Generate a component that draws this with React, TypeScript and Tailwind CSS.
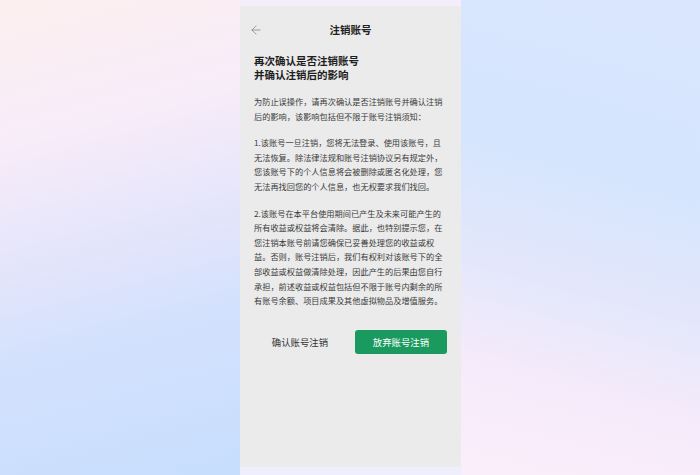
import { ArrowLeft } from 'lucide-react'

const paragraphs: string[][] = [
  ['为防止误操作，请再次确认是否注销账号并确认注销', '后的影响，该影响包括但不限于账号注销须知：'],
  [
    '1.该账号一旦注销，您将无法登录、使用该账号，且',
    '无法恢复。除法律法规和账号注销协议另有规定外，',
    '您该账号下的个人信息将会被删除或匿名化处理，您',
    '无法再找回您的个人信息，也无权要求我们找回。',
  ],
  [
    '2.该账号在本平台使用期间已产生及未来可能产生的',
    '所有收益或权益将会清除。据此，也特别提示您，在',
    '您注销本账号前请您确保已妥善处理您的收益或权',
    '益。否则，账号注销后，我们有权利对该账号下的全',
    '部收益或权益做清除处理，因此产生的后果由您自行',
    '承担，前述收益或权益包括但不限于账号内剩余的所',
    '有账号余额、项目成果及其他虚拟物品及增值服务。',
  ],
]

export default function App() {
  return (
    <div
      className="flex h-[475px] w-[700px] overflow-hidden"
      style={{ fontFamily: '"Noto Sans CJK SC", "Noto Sans", sans-serif' }}
    >
      <div className="w-[240px] bg-[linear-gradient(165deg,#fcefef_0%,#f7ecf9_28%,#e4e5fb_50%,#d2e1fd_70%,#c7defd_100%)]" />

      <div className="flex w-[221px] flex-col bg-[linear-gradient(180deg,#f4eefb_0%,#e6e8fc_50%,#eeeefc_100%)] pt-[6px]">
        <div className="flex h-[461px] flex-col bg-[#ebebeb] px-[14px]">
          <div className="grid grid-cols-[1fr_auto_1fr] items-center pt-[17px]">
            <ArrowLeft className="-ml-[5px] h-[14px] w-[14px] text-[#8a8a8a]" strokeWidth={1.4} />
            <h1 className="text-[10.5px] font-bold leading-[14px] text-[#222]">注销账号</h1>
            <span />
          </div>

          <h2 className="mt-[17px] text-[10.5px] font-bold leading-[14px] text-[#1e1e1e]">
            <span className="block">再次确认是否注销账号</span>
            <span className="block">并确认注销后的影响</span>
          </h2>

          <div className="mt-[12px] flex flex-col gap-[12px] text-[8.2px] leading-[14.6px] text-[#3a3a3a]">
            {paragraphs.map((lines, i) => (
              <p key={i}>
                {lines.map((line) => (
                  <span key={line} className="block whitespace-nowrap">
                    {line}
                  </span>
                ))}
              </p>
            ))}
          </div>

          <div className="mt-[22px] flex gap-[9px]">
            <button className="h-[24px] w-[92px] text-[9.4px] text-[#333]">确认账号注销</button>
            <button className="h-[24px] w-[92px] rounded-[3px] bg-[#1a9a5e] text-[9.4px] text-white">
              放弃账号注销
            </button>
          </div>
        </div>
      </div>

      <div className="flex-1 bg-[linear-gradient(195deg,#dae6fe_0%,#d4e5fd_35%,#e4e7fb_60%,#f6ebfa_80%,#fbeefb_100%)]" />
    </div>
  )
}
